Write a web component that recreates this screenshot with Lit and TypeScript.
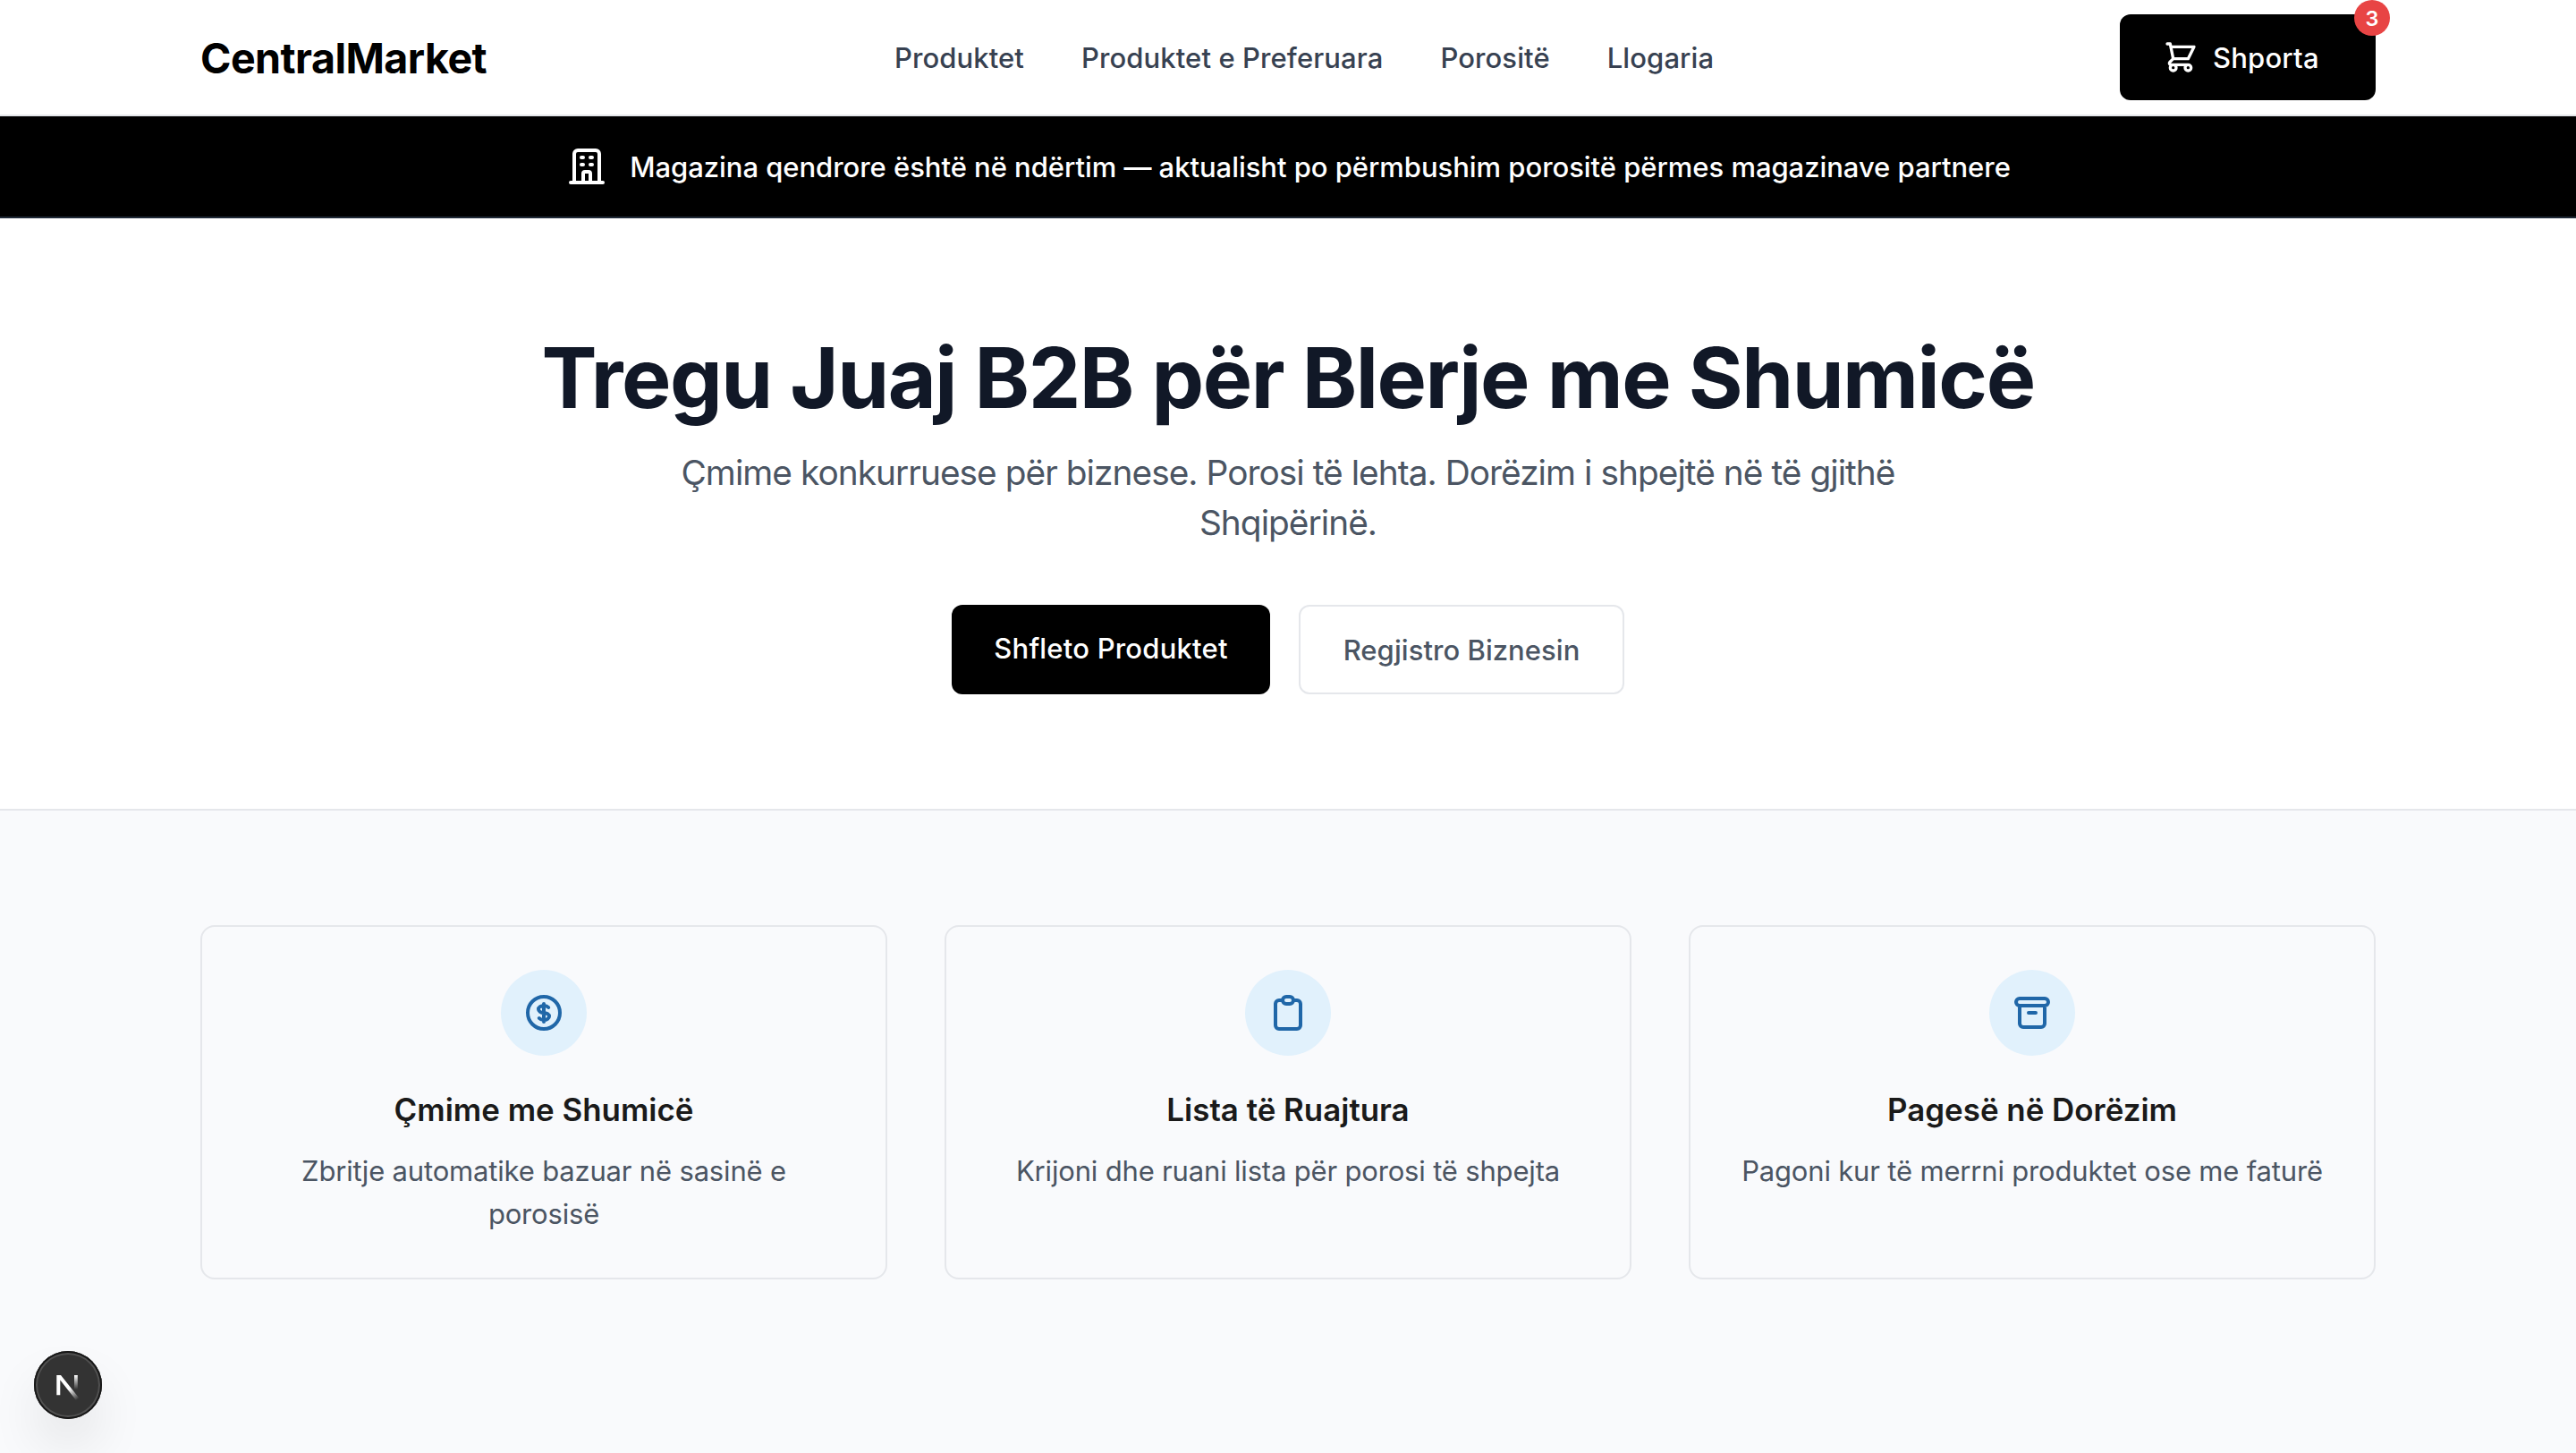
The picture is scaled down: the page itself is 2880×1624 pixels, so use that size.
import { html, css, svg, LitElement } from "lit";
import { customElement, property } from "lit/decorators.js";

const icons = {
    cart: svg`<path d="M3 3h2l.4 2M7 13h10l4-8H5.4M7 13L5.4 5M7 13l-2.293 2.293c-.63.63-.184 1.707.707 1.707H17m0 0a2 2 0 100 4 2 2 0 000-4zm-8 2a2 2 0 11-4 0 2 2 0 014 0z"/>`,
    building: svg`<path d="M19 21V5a2 2 0 00-2-2H7a2 2 0 00-2 2v16m14 0h2m-2 0h-5m-9 0H3m2 0h5M9 7h1m-1 4h1m4-4h1m-1 4h1m-5 10v-5a1 1 0 011-1h2a1 1 0 011 1v5m-4 0h4"/>`,
    dollar: svg`<path d="M12 8c-1.657 0-3 .895-3 2s1.343 2 3 2 3 .895 3 2-1.343 2-3 2m0-8c1.11 0 2.08.402 2.599 1M12 8V7m0 1v8m0 0v1m0-1c-1.11 0-2.08-.402-2.599-1M21 12a9 9 0 11-18 0 9 9 0 0118 0z"/>`,
    clipboard: svg`<path d="M9 5H7a2 2 0 00-2 2v12a2 2 0 002 2h10a2 2 0 002-2V7a2 2 0 00-2-2h-2M9 5a2 2 0 002 2h2a2 2 0 002-2M9 5a2 2 0 012-2h2a2 2 0 012 2"/>`,
    archive: svg`<path d="M5 8h14M5 8a2 2 0 110-4h14a2 2 0 110 4M5 8v10a2 2 0 002 2h10a2 2 0 002-2V8m-9 4h4"/>`,
};

type IconName = keyof typeof icons;

@customElement("app-icon")
export class AppIcon extends LitElement {
    static styles = css`
        :host {
            display: block;
            flex: none;
            width: 48px;
            height: 48px;
        }

        .icon {
            display: block;
            width: 100%;
            height: 100%;

            fill: none;
            stroke: currentColor;
            stroke-width: 2;
            stroke-linecap: round;
            stroke-linejoin: round;
        }
    `;

    @property()
    name: IconName;

    render() {
        return html`<svg class="icon" viewBox="0 0 24 24">${icons[this.name]}</svg>`;
    }
}

@customElement("feature-card")
export class FeatureCard extends LitElement {
    static styles = css`
        :host {
            display: flex;
            flex-direction: column;
            align-items: center;

            border: solid 2px #e5e7eb;
            border-radius: 16px;

            padding: 48px 48px 47px;
            box-sizing: border-box;

            text-align: center;
        }

        .circle {
            display: flex;
            flex: none;
            align-items: center;
            justify-content: center;

            width: 96px;
            height: 96px;

            color: #2067a8;
            background: #e1f1fc;
            border-radius: 50%;
        }

        .title {
            margin: 32px 0 16px;

            color: #1a1a1a;
            font-size: 34.9px;
            font-weight: 600;
            line-height: 56px;
        }

        .text {
            margin: 0;
            padding-top: 1px;

            color: #4b5563;
            font-size: 31px;
            line-height: 48px;
            letter-spacing: -0.175px;
        }
    `;

    @property()
    icon: IconName;

    @property()
    heading: string;

    @property()
    text: string;

    render() {
        return html`
            <div class="circle"><app-icon name="${this.icon}"></app-icon></div>
            <h3 class="title">${this.heading}</h3>
            <p class="text">${this.text}</p>
        `;
    }
}

@customElement("app-root")
export class AppRoot extends LitElement {
    static styles = css`
        :host {
            display: flex;
            flex-direction: column;

            min-height: 1624px;

            font-family: Inter, sans-serif;
            background: #f9fafc;
        }

        .header {
            display: flex;
            align-items: center;
            justify-content: space-between;

            height: 130px;
            padding: 0 224px;
            box-sizing: border-box;

            background: #ffffff;
            border-bottom: solid 2px #e5e7eb;
        }

        .logo {
            padding-top: 1px;

            color: #000000;
            font-size: 46.6px;
            font-weight: 700;
            line-height: 64px;
            letter-spacing: -0.55px;
        }

        .nav {
            display: flex;
            gap: 64px;

            padding-left: 2px;
        }

        .link {
            padding-top: 2px;

            color: #374151;
            font-size: 31px;
            font-weight: 500;
            line-height: 48px;
            letter-spacing: 0.1px;
            text-decoration: none;
        }

        .cart {
            position: relative;

            display: flex;
            align-items: center;
            gap: 16px;

            width: 286px;
            height: 96px;
            padding: 0 48px;
            box-sizing: border-box;

            color: #ffffff;
            font-family: inherit;
            font-size: 31px;
            font-weight: 500;
            line-height: 48px;
            letter-spacing: 0.2px;

            background: #000000;
            border: none;
            border-radius: 12px;
        }

        .cart-icon {
            width: 40px;
            height: 40px;
        }

        .cart-label {
            padding-top: 2px;
        }

        .badge {
            position: absolute;
            top: -16px;
            right: -16px;

            width: 40px;
            height: 40px;

            font-size: 23.4px;
            font-weight: 600;
            line-height: 41px;
            letter-spacing: 0;
            text-align: center;

            background: #e84444;
            border-radius: 50%;
        }

        .banner {
            display: flex;
            align-items: center;
            justify-content: center;
            gap: 24px;

            height: 114px;
            box-sizing: border-box;

            color: #ffffff;
            font-size: 31px;
            font-weight: 500;
            line-height: 48px;
            letter-spacing: -0.04px;

            background: #000000;
            border-bottom: solid 2px #1f2937;
        }

        .banner-text {
            padding-top: 1px;
        }

        .hero {
            display: flex;
            flex-direction: column;
            align-items: center;

            padding: 128px 64px;

            text-align: center;

            background: #ffffff;
            border-bottom: solid 2px #e5e7eb;
        }

        .headline {
            margin: 0;

            color: #111827;
            font-size: 93.1px;
            font-weight: 700;
            line-height: 100px;
            letter-spacing: -1.48px;
            white-space: nowrap;
        }

        .subtitle {
            max-width: 1536px;
            margin: 28px 0 64px;

            color: #4b5563;
            font-size: 38.8px;
            line-height: 56px;
            letter-spacing: -0.955px;
        }

        .actions {
            display: flex;
            gap: 32px;
        }

        .button {
            width: 356px;
            height: 100px;
            padding: 0 0 2px;
            box-sizing: border-box;

            color: #ffffff;
            font-family: inherit;
            font-size: 31px;
            font-weight: 500;
            line-height: 48px;
            letter-spacing: 0.21px;

            background: #000000;
            border: none;
            border-radius: 12px;
        }

        .button.outline {
            width: 364px;
            padding: 2px 0 0;

            color: #4b5563;
            letter-spacing: 0.04px;

            background: #ffffff;
            border: solid 2px #e5e7eb;
        }

        .features {
            display: grid;
            grid-template-columns: repeat(3, 1fr);
            gap: 64px;

            padding: 128px 224px;
        }

        .dev-badge {
            position: fixed;
            left: 38px;
            bottom: 38px;

            width: 76px;
            height: 76px;

            background: #333333;
            border-radius: 50%;
            box-shadow: inset 0 0 0 2px #171717, inset 0 0 0 4px #505050, 0 32px 64px -16px rgba(0, 0, 0, 0.24);
        }
    `;

    links = ["Produktet", "Produktet e Preferuara", "Porositë", "Llogaria"];

    features = [
        { icon: "dollar", heading: "Çmime me Shumicë", text: "Zbritje automatike bazuar në sasinë e porosisë" },
        { icon: "clipboard", heading: "Lista të Ruajtura", text: "Krijoni dhe ruani lista për porosi të shpejta" },
        { icon: "archive", heading: "Pagesë në Dorëzim", text: "Pagoni kur të merrni produktet ose me faturë" },
    ];

    render() {
        return html`
            <header class="header">
                <div class="logo">CentralMarket</div>
                <nav class="nav">
                    ${this.links.map(link => html`<a class="link" href="#">${link}</a>`)}
                </nav>
                <button class="cart">
                    <app-icon class="cart-icon" name="cart"></app-icon>
                    <span class="cart-label">Shporta</span>
                    <span class="badge">3</span>
                </button>
            </header>

            <div class="banner">
                <app-icon name="building"></app-icon>
                <span class="banner-text">Magazina qendrore është në ndërtim — aktualisht po përmbushim porositë përmes magazinave partnere</span>
            </div>

            <section class="hero">
                <h1 class="headline">Tregu Juaj B2B për Blerje me Shumicë</h1>
                <p class="subtitle">Çmime konkurruese për biznese. Porosi të lehta. Dorëzim i shpejtë në të gjithë Shqipërinë.</p>
                <div class="actions">
                    <button class="button">Shfleto Produktet</button>
                    <button class="button outline">Regjistro Biznesin</button>
                </div>
            </section>

            <section class="features">
                ${this.features.map(feature => html`
                <feature-card icon="${feature.icon}" heading="${feature.heading}" text="${feature.text}"></feature-card>
                `)}
            </section>

            <svg class="dev-badge" viewBox="0 0 76 76">
                <defs>
                    <linearGradient id="diagonal" gradientUnits="userSpaceOnUse" x1="40" y1="42" x2="49" y2="54">
                        <stop stop-color="#ffffff"/>
                        <stop offset="1" stop-color="#ffffff" stop-opacity="0"/>
                    </linearGradient>
                    <linearGradient id="stem" gradientUnits="userSpaceOnUse" x1="0" y1="27" x2="0" y2="43">
                        <stop stop-color="#ffffff"/>
                        <stop offset="1" stop-color="#ffffff" stop-opacity="0"/>
                    </linearGradient>
                </defs>
                <path fill="url(#diagonal)" d="M25.3 27H30L50.3 52.6L47 55L29.3 32.6V49.3H25.3Z"/>
                <rect fill="url(#stem)" x="45" y="27" width="3.8" height="16"/>
            </svg>
        `;
    }
}
